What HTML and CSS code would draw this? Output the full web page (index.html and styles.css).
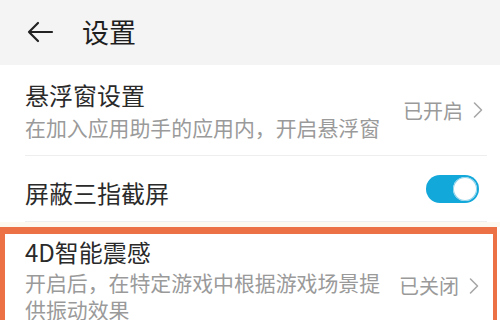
FILE: index.html
```html
<!DOCTYPE html>
<html lang="zh-CN">
  <head>
    <meta charset="UTF-8" />
    <meta name="viewport" content="width=device-width, initial-scale=1.0" />
    <title>设置</title>
    <link rel="stylesheet" href="styles.css">
  </head>
  <body>
    <header class="topbar">
      <svg class="back" width="28" height="22" viewBox="0 0 28 22">
        <path d="M26 11H3M12 2L3 11l9 9" fill="none" stroke="#222" stroke-width="2.2" stroke-linecap="round" stroke-linejoin="round"/>
      </svg>
      <h1>设置</h1>
    </header>

    <div class="list">
      <div class="row row-float">
        <div class="text">
          <div class="title">悬浮窗设置</div>
          <div class="desc">在加入应用助手的应用内，开启悬浮窗</div>
        </div>
        <div class="value">
          已开启
          <svg class="chevron" width="10" height="18" viewBox="0 0 10 18">
            <path d="M1.5 2l7 7-7 7" fill="none" stroke="#a8a8a8" stroke-width="1.6" stroke-linecap="round" stroke-linejoin="round"/>
          </svg>
        </div>
      </div>

      <div class="row row-switch">
        <div class="title">屏蔽三指截屏</div>
        <div class="switch on"><span class="knob"></span></div>
      </div>

      <div class="gap"></div>

      <div class="highlight">
        <div class="row row-4d">
          <div class="text">
            <div class="title">4D智能震感</div>
            <div class="desc">开启后，在特定游戏中根据游戏场景提供振动效果</div>
          </div>
          <div class="value value-top">
            已关闭
            <svg class="chevron" width="10" height="18" viewBox="0 0 10 18">
              <path d="M1.5 2l7 7-7 7" fill="none" stroke="#a8a8a8" stroke-width="1.6" stroke-linecap="round" stroke-linejoin="round"/>
            </svg>
          </div>
        </div>
      </div>
    </div>
  </body>
</html>
```

FILE: styles.css
```css
* {
  margin: 0;
  padding: 0;
  box-sizing: border-box;
  font-family: "Noto Sans CJK SC", "Noto Sans", sans-serif;
}

body {
  width: 500px;
  height: 320px;
  overflow: hidden;
  background: #fff;
}

.topbar {
  height: 65px;
  background: #f4f4f4;
  display: flex;
  align-items: center;
  padding-left: 26px;
  padding-bottom: 2px;
}

.topbar h1 {
  font-size: 27px;
  font-weight: 400;
  color: #1e1e1e;
  margin-left: 28px;
  line-height: 32px;
}

.row {
  display: flex;
  align-items: center;
  margin-left: 25px;
  margin-right: 13px;
  border-bottom: 1px solid #eeeeee;
}

.title {
  font-size: 24px;
  line-height: 30px;
  color: #2a2a2a;
}

.desc {
  font-size: 20.9px;
  line-height: 27px;
  color: #9a9a9a;
}

.text {
  flex: 1;
}

.row-float {
  height: 91px;
}

.row-float .desc {
  margin-top: 4px;
}

.value {
  display: flex;
  align-items: center;
  font-size: 20px;
  color: #9a9a9a;
  white-space: nowrap;
  margin-right: 4px;
}

.chevron {
  margin-left: 10px;
}

.row-switch {
  height: 66px;
  justify-content: space-between;
  padding-top: 8px;
}

.switch {
  width: 53px;
  height: 28px;
  border-radius: 14px;
  background: #d8d8d8;
  padding: 2px;
  display: flex;
  margin-top: -8px;
  margin-right: 8px;
}

.switch.on {
  background: #13a8da;
  justify-content: flex-end;
}

.knob {
  width: 24px;
  height: 24px;
  border-radius: 50%;
  background: #fff;
  box-shadow: 0 0 0 1px #8fd2ea inset;
}

.gap {
  height: 5px;
  background: #fdf9f1;
}

.highlight {
  border: solid #ec7144;
  border-width: 7px 4px 0 5px;
  width: 497px;
  height: 100px;
}

.row-4d {
  margin-left: 20px;
  align-items: flex-start;
  border-bottom: none;
  padding-top: 3px;
}

.row-4d .text {
  flex: none;
  width: 360px;
}

.row-4d .desc {
  margin-top: 2px;
}

.value-top {
  margin-left: auto;
  margin-top: 34px;
  margin-right: 1px;
}
```
